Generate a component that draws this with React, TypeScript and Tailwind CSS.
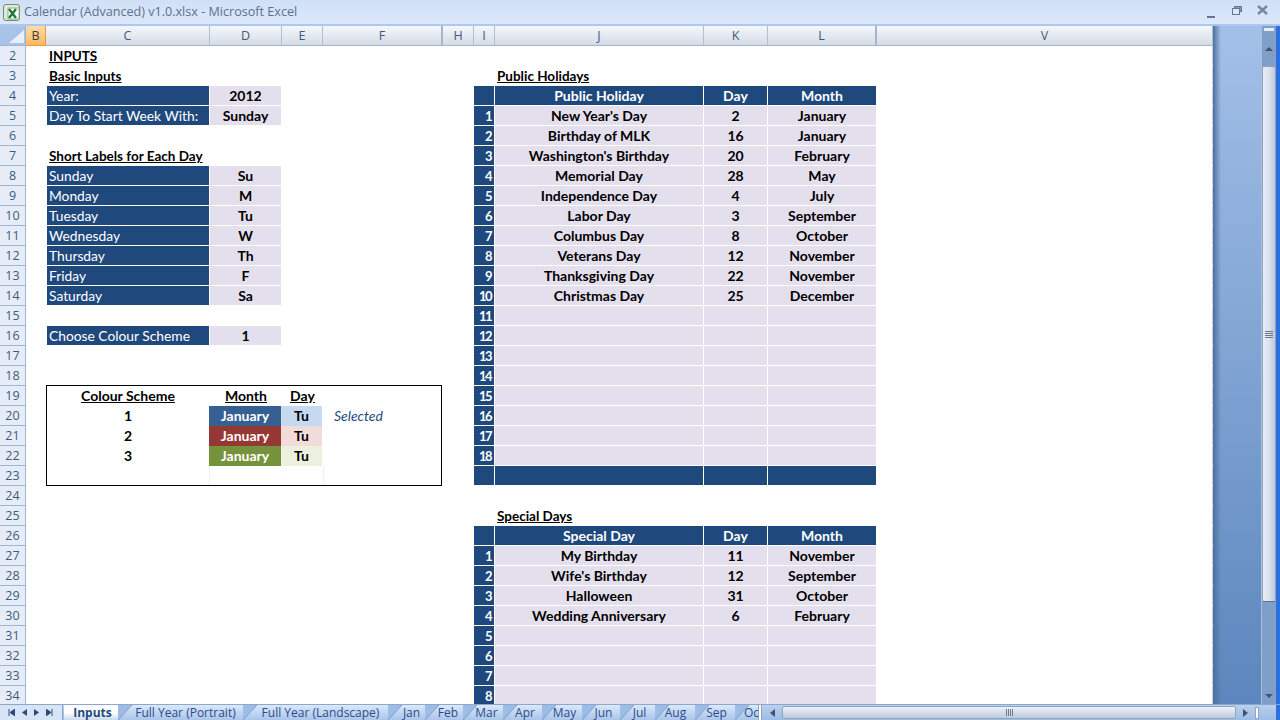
type Kind = "title" | "titleR" | "navy" | "navyC" | "navyN" | "lilac" | "plainB" | "s1" | "s1t" | "s2" | "s2t" | "s3" | "s3t" | "sel" | "hdrU" | "faintL" | "faintR";
type Cell = [string, Kind] | null;

// col B is always empty, everything else per row
const kinds: Record<Kind, string> = {
  title: "font-bold underline text-black text-[13.5px] pt-[1px] pl-[3px] whitespace-nowrap",
  titleR: "font-bold underline text-black text-[13.5px] pt-[1px] pl-[2px] whitespace-nowrap",
  navy: "bg-[#1f497d] border-l border-r border-b border-white text-white text-[13.8px] pl-[2px] whitespace-nowrap",
  navyC: "bg-[#1f497d] border-b border-r border-white text-white font-bold text-center",
  navyN: "bg-[#1f497d] border-b border-r border-white text-white font-bold text-[13px] tracking-[-1.5px] text-right pt-[1px] pr-[3px]",
  lilac: "bg-[#e4dfec] border-b border-r border-white text-black font-bold text-center",
  plainB: "font-bold text-black text-center",
  hdrU: "font-bold underline text-black text-center",
  s1: "bg-[#366092] -ml-[1px] mr-[1px] text-white font-bold text-center",
  s1t: "bg-[#c5d9f1] -ml-[1px] mr-[1px] text-black font-bold text-center",
  s2: "bg-[#953735] -ml-[1px] mr-[1px] text-white font-bold text-center",
  s2t: "bg-[#f2dcdb] -ml-[1px] mr-[1px] text-black font-bold text-center",
  s3: "bg-[#76933c] -ml-[1px] mr-[1px] text-white font-bold text-center",
  s3t: "bg-[#ebf1de] -ml-[1px] mr-[1px] text-black font-bold text-center",
  sel: "italic text-[#1f497d] pl-[11px]",
  faintL: "border-l border-[#f0f0f0] -ml-[1px]",
  faintR: "border-r border-[#f0f0f0] -mr-[1px]",
};

const holidays: [string, string, string][] = [
  ["New Year's Day", "2", "January"],
  ["Birthday of MLK", "16", "January"],
  ["Washington's Birthday", "20", "February"],
  ["Memorial Day", "28", "May"],
  ["Independence Day", "4", "July"],
  ["Labor Day", "3", "September"],
  ["Columbus Day", "8", "October"],
  ["Veterans Day", "12", "November"],
  ["Thanksgiving Day", "22", "November"],
  ["Christmas Day", "25", "December"],
];

const specials: [string, string, string][] = [
  ["My Birthday", "11", "November"],
  ["Wife's Birthday", "12", "September"],
  ["Halloween", "31", "October"],
  ["Wedding Anniversary", "6", "February"],
];

// C D E F by row number
const leftSide: Record<number, Cell[]> = {
  2: [["INPUTS", "title"]],
  3: [["Basic Inputs", "title"]],
  4: [["Year:", "navy"], ["2012", "lilac"]],
  5: [["Day To Start Week With:", "navy"], ["Sunday", "lilac"]],
  7: [["Short Labels for Each Day", "title"]],
  8: [["Sunday", "navy"], ["Su", "lilac"]],
  9: [["Monday", "navy"], ["M", "lilac"]],
  10: [["Tuesday", "navy"], ["Tu", "lilac"]],
  11: [["Wednesday", "navy"], ["W", "lilac"]],
  12: [["Thursday", "navy"], ["Th", "lilac"]],
  13: [["Friday", "navy"], ["F", "lilac"]],
  14: [["Saturday", "navy"], ["Sa", "lilac"]],
  16: [["Choose Colour Scheme", "navy"], ["1", "lilac"]],
  19: [["Colour Scheme", "hdrU"], ["Month", "hdrU"], ["Day", "hdrU"]],
  20: [["1", "plainB"], ["January", "s1"], ["Tu", "s1t"], ["Selected", "sel"]],
  21: [["2", "plainB"], ["January", "s2"], ["Tu", "s2t"]],
  22: [["3", "plainB"], ["January", "s3"], ["Tu", "s3t"]],
  23: [null, ["", "faintL"], ["", "faintR"]],
};

// I J K L by row number
const rightSide = (n: number): Cell[] => {
  if (n === 3) return [null, ["Public Holidays", "titleR"]];
  if (n === 25) return [null, ["Special Days", "titleR"]];
  if (n === 4 || n === 26) {
    return [["", "navyN"], [n === 4 ? "Public Holiday" : "Special Day", "navyC"], ["Day", "navyC"], ["Month", "navyC"]];
  }
  if (n === 23) return [["", "navyN"], ["", "navyC"], ["", "navyC"], ["", "navyC"]];
  const list = n < 23 ? holidays : specials;
  const idx = n < 23 ? n - 5 : n - 27;
  if (idx < 0) return [];
  const row = list[idx] ?? ["", "", ""];
  return [[String(idx + 1), "navyN"], [row[0], "lilac"], [row[1], "lilac"], [row[2], "lilac"]];
};

const columnHeads = [
  { l: "B", w: "w-[20px]", on: true },
  { l: "C", w: "w-[164px]" },
  { l: "D", w: "w-[72px]" },
  { l: "E", w: "w-[41px]" },
  { l: "F", w: "w-[120px]", thick: true },
  { l: "H", w: "w-[31px]" },
  { l: "I", w: "w-[21px]" },
  { l: "J", w: "w-[209px]" },
  { l: "K", w: "w-[64px]" },
  { l: "L", w: "w-[109px]", thick: true },
  { l: "V", w: "w-[336px]" },
];

const rows = Array.from({ length: 33 }, (_, i) => i + 2);

const tabs = [
  { t: "Full Year (Portrait)", c: "w-[125px] pl-[10px]" },
  { t: "Full Year (Landscape)", c: "w-[145px] pl-[10px]" },
  { t: "Jan", c: "w-[37px] pl-[10px]" },
  { t: "Feb", c: "w-[38px] pl-[8px]" },
  { t: "Mar", c: "w-[40px] pl-[7px]" },
  { t: "Apr", c: "w-[39px] pl-[5px]" },
  { t: "May", c: "w-[40px] pl-[5px]" },
  { t: "Jun", c: "w-[38px] pl-[5px]" },
  { t: "Jul", c: "w-[35px] pl-[4px]" },
  { t: "Aug", c: "w-[40px] pl-[1px]" },
  { t: "Sep", c: "w-[40px] pl-[3px]" },
];

function Slant() {
  return (
    <svg width="14" height="15" viewBox="0 0 14 15" className="absolute left-0 top-0">
      <path d="M0 15 L14 0 L0 0 Z" fill="#9dbce6" />
      <path d="M0 15 L14 0" stroke="#7f9cc6" fill="none" />
    </svg>
  );
}

function Sheet() {
  return (
    <div className="relative grid grid-cols-[20px_164px_72px_41px_120px_31px_21px_209px_64px_109px_335px] auto-rows-[20px] bg-white text-[14px] leading-[19px] font-['Lato',sans-serif]">
      {rows.map((n) => {
        const left = leftSide[n] ?? [];
        const right = rightSide(n);
        return (
          <div key={n} className="contents">
            <div />
            {[0, 1, 2, 3].map((i) => {
              const c = left[i];
              return <div key={i} className={c ? kinds[c[1]] : ""}>{c ? c[0] : ""}</div>;
            })}
            <div />
            {[0, 1, 2, 3].map((i) => {
              const c = right[i];
              return <div key={i} className={c ? kinds[c[1]] : ""}>{c ? c[0] : ""}</div>;
            })}
            <div />
          </div>
        );
      })}
      <div className="absolute left-[20px] top-[339px] w-[396px] h-[101px] border border-black pointer-events-none" />
    </div>
  );
}

export default function App() {
  return (
    <div className="w-[1280px] h-[720px] overflow-hidden flex flex-col font-['Open_Sans',sans-serif]">
      {/* title bar */}
      <div className="h-[26px] shrink-0 flex items-center bg-gradient-to-b from-[#cfe0f6] to-[#dde9fa] border-b-2 border-[#a9c9f0]">
        <svg width="19" height="19" viewBox="0 0 19 19" className="ml-[2px]">
          <rect x="1.5" y="1.5" width="16" height="16" rx="2.5" fill="#dfeadb" stroke="#6f8f6a" />
          <rect x="6" y="5" width="11" height="11" fill="#ffffff" stroke="#8db08d" />
          <path d="M7 6 L14 15 M14 6 L7 15" stroke="#1e7a34" strokeWidth="2.4" />
        </svg>
        <span className="ml-[3px] text-[12.6px] text-[#5f6f8c]">Calendar (Advanced) v1.0.xlsx - Microsoft Excel</span>
        <div className="ml-auto flex items-center pr-[12px]">
          <svg width="8" height="8" viewBox="0 0 8 8" className="mt-[6px]"><rect x="0" y="5" width="8" height="2" fill="#66758f" /></svg>
          <svg width="10" height="9" viewBox="0 0 10 9" className="ml-[17px] -mt-[4px]">
            <rect x="2.5" y="0.5" width="7" height="5" fill="#8a99b3" stroke="#66758f" />
            <rect x="0.5" y="2.5" width="7" height="6" fill="#dbe8fa" stroke="#66758f" />
          </svg>
          <svg width="11" height="10" viewBox="0 0 11 10" className="ml-[15px] -mt-[4px]">
            <path d="M1 1 L10 9 M10 1 L1 9" stroke="#7686a0" strokeWidth="2.4" />
          </svg>
        </div>
      </div>

      <div className="flex-1 min-h-0 flex">
        <div className="w-[1213px] shrink-0 flex flex-col overflow-hidden">
          {/* column letters */}
          <div className="h-[20px] shrink-0 flex text-[12.5px] text-[#3e5b7c]">
            <div className="w-[26px] shrink-0 bg-[#a8c3e7] border-r border-b border-[#9eb6ce] relative">
              <svg width="15" height="13" viewBox="0 0 15 13" className="absolute right-[1px] bottom-[2px]"><path d="M15 0 V13 H0 Z" fill="#e8f0fb" /></svg>
            </div>
            {columnHeads.map((c) => (
              <div
                key={c.l}
                className={
                  c.on
                    ? `${c.w} shrink-0 pt-[2px] flex items-center justify-center bg-gradient-to-b from-[#fbdca8] to-[#f9b860] border-r border-b border-[#f29536] text-[#3e3e3e]`
                    : c.thick
                      ? `${c.w} shrink-0 pt-[2px] flex items-center justify-center bg-gradient-to-b from-[#f5f7fb] to-[#d5dbe6] border-r-2 border-b border-r-[#a3b6cd] border-b-[#9eb6ce]`
                      : `${c.w} shrink-0 pt-[2px] flex items-center justify-center bg-gradient-to-b from-[#f5f7fb] to-[#d5dbe6] border-r border-b border-r-[#b0c0d4] border-b-[#9eb6ce]`
                }
              >
                {c.l}
              </div>
            ))}
          </div>
          <div className="flex-1 min-h-0 flex overflow-hidden">
            {/* row numbers */}
            <div className="w-[26px] shrink-0 flex flex-col text-[12.5px] text-[#3e5b7c]">
              {rows.map((n) => (
                <div key={n} className="h-[20px] shrink-0 pt-[1px] flex items-center justify-center bg-[#e6edf8] border-r border-b border-[#9eb6ce]">
                  {n}
                </div>
              ))}
            </div>
            <Sheet />
            <div className="w-[1px] shrink-0 bg-[repeating-linear-gradient(to_bottom,#c3cede_0px,#c3cede_19px,#ffffff_19px,#ffffff_20px)]" />
          </div>
        </div>

        {/* empty app workspace */}
        <div className="w-[48px] shrink-0 relative bg-gradient-to-b from-[#a3c0e8] to-[#5c86bd]">
          <div className="absolute inset-y-0 left-0 w-[8px] bg-gradient-to-r from-[#4f6f9c] to-transparent" />
        </div>

        {/* vertical scrollbar */}
        <div className="w-[15px] shrink-0 flex flex-col items-stretch bg-[#7f9fc9] border-l border-[#a9bfdc]">
          <div className="h-[5px] mx-[1px] mt-[1px] bg-[#e6eef8] border border-[#8aa0bd] shrink-0" />
          <div className="h-[34px] shrink-0 flex items-center justify-center">
            <div className="w-0 h-0 border-l-[4px] border-r-[4px] border-b-[4px] border-l-transparent border-r-transparent border-b-[#44526f]" />
          </div>
          <div className="h-[536px] shrink-0 flex items-center justify-center rounded-[2px] border border-[#8fa3bf] border-b-[#5f7397] bg-gradient-to-r from-[#e8edf5] via-[#dce3ee] to-[#bcc9dc]">
            <div className="flex flex-col gap-[1px]">
              <div className="w-[8px] h-[1px] bg-[#6b7a90]" />
              <div className="w-[8px] h-[1px] bg-[#6b7a90]" />
              <div className="w-[8px] h-[1px] bg-[#6b7a90]" />
              <div className="w-[8px] h-[1px] bg-[#6b7a90]" />
            </div>
          </div>
          <div className="mt-auto h-[16px] shrink-0 flex items-center justify-center">
            <div className="w-0 h-0 border-l-[4px] border-r-[4px] border-t-[4px] border-l-transparent border-r-transparent border-t-[#44526f]" />
          </div>
        </div>
        <div className="w-[4px] shrink-0 bg-[#2b6fe0]" />
      </div>

      {/* sheet tabs + horizontal scrollbar */}
      <div className="h-[16px] shrink-0 flex bg-gradient-to-b from-[#b9d0ee] to-[#9dbce6] border-t border-[#8ca8cf] text-[12px] leading-[15px]">
        <div className="w-[63px] shrink-0 flex items-center justify-around pl-[5px] pr-[6px] bg-[#d6e4f6] border-r border-[#8ca8cf]">
          <svg width="7" height="7" viewBox="0 0 7 7"><path d="M1 0V7M7 0V7L2 3.5Z" stroke="#2f4a78" fill="#2f4a78" /></svg>
          <svg width="5" height="7" viewBox="0 0 5 7"><path d="M5 0V7L0 3.5Z" fill="#2f4a78" /></svg>
          <svg width="5" height="7" viewBox="0 0 5 7"><path d="M0 0V7L5 3.5Z" fill="#2f4a78" /></svg>
          <svg width="7" height="7" viewBox="0 0 7 7"><path d="M6 0V7M0 0V7L5 3.5Z" stroke="#2f4a78" fill="#2f4a78" /></svg>
        </div>
        <div className="w-[695px] shrink-0 flex overflow-hidden">
          <div className="w-[54px] shrink-0 ml-[1px] pl-[3px] text-center bg-gradient-to-b from-white via-white to-[#c9d9ee] font-bold text-[#1f497d]">Inputs</div>
          {tabs.map((t) => (
            <div key={t.t} className={`${t.c} shrink-0 relative text-center whitespace-nowrap bg-gradient-to-b from-[#dbe8f9] to-[#a9c5ea] text-[#2f4a8a]`}>
              <Slant />
              <span className="relative">{t.t}</span>
            </div>
          ))}
          <div className="w-[60px] shrink-0 relative text-[#2f4a8a] pl-[9px] bg-gradient-to-b from-[#dbe8f9] to-[#a9c5ea]">
            <Slant />
            <span className="relative">Oct</span>
          </div>
        </div>
        <div className="w-[4px] shrink-0 bg-white border-x border-[#8fa3bf]" />
        <div className="flex-1 flex items-center">
          <div className="w-[20px] flex justify-center"><div className="w-0 h-0 border-t-[4px] border-b-[4px] border-r-[5px] border-t-transparent border-b-transparent border-r-[#44526f]" /></div>
          <div className="w-[454px] h-[13px] rounded-[2px] flex items-center justify-center border border-[#8fa3bf] bg-gradient-to-b from-[#eef2f8] to-[#bcc9dc]">
            <div className="flex gap-[1px]">
              <div className="w-[1px] h-[7px] bg-[#6b7a90]" />
              <div className="w-[1px] h-[7px] bg-[#6b7a90]" />
              <div className="w-[1px] h-[7px] bg-[#6b7a90]" />
              <div className="w-[1px] h-[7px] bg-[#6b7a90]" />
            </div>
          </div>
          <div className="w-[18px] flex justify-center"><div className="w-0 h-0 border-t-[4px] border-b-[4px] border-l-[5px] border-t-transparent border-b-transparent border-l-[#44526f]" /></div>
          <div className="w-[4px] h-[12px] ml-[1px] bg-white border border-[#8fa3bf]" />
          <div className="ml-auto w-[4px] h-full bg-[#2b6fe0]" />
        </div>
      </div>
    </div>
  );
}
